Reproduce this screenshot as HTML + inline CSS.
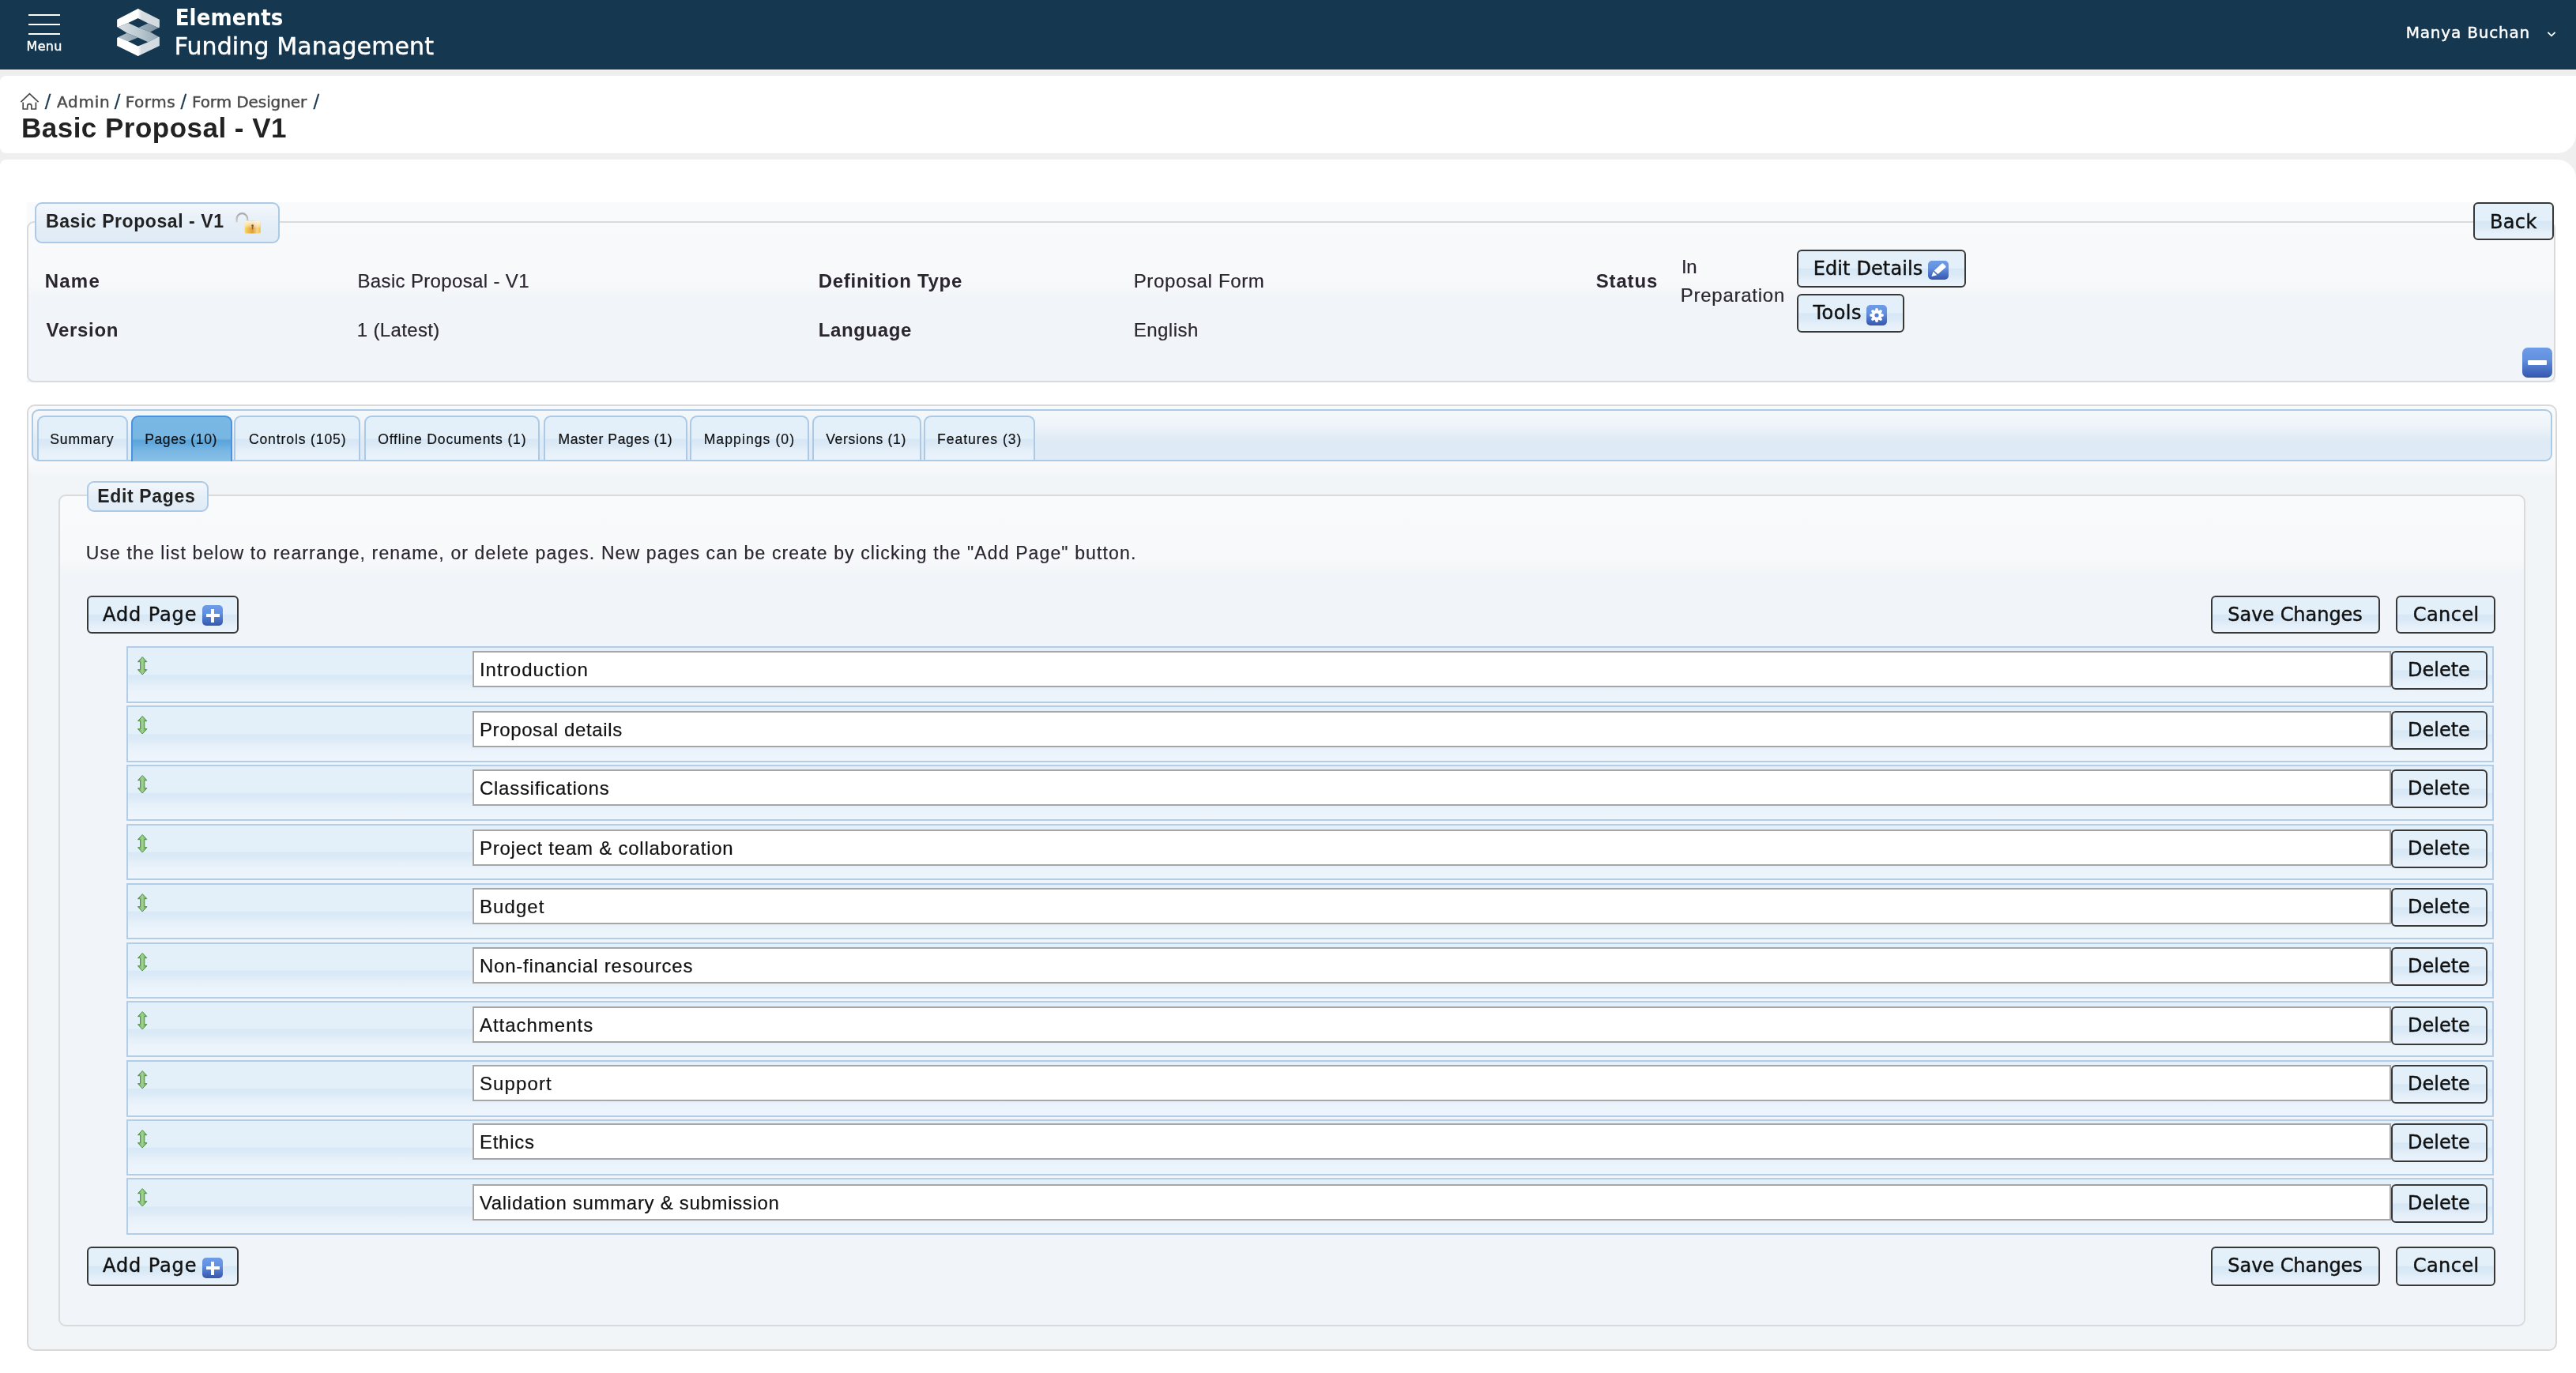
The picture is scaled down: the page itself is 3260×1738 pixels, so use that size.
<!DOCTYPE html>
<html lang="en">
<head>
<meta charset="utf-8">
<title>Basic Proposal - V1 - Form Designer</title>
<style>
html,body{margin:0;padding:0}
body{width:3260px;height:1738px;overflow:hidden;background:#fff;position:relative;font-family:"Liberation Sans","DejaVu Sans",sans-serif}
.b{position:absolute;box-sizing:border-box}
.t{position:absolute;white-space:pre;line-height:1}
svg.b{overflow:visible}
.hdr{left:0;top:0;width:3260px;height:88px;background:#15374f}
.gray{left:0;top:88px;width:3260px;height:140px;background:#efefef}
.crumbs{left:0;top:96px;width:3260px;height:98px;background:#fff;border-radius:8px 0 24px 8px}
.main{left:0;top:202px;width:3260px;height:1536px;background:#fff;border-radius:8px 24px 0 0}
.fsbg{background:linear-gradient(to bottom,#f9fafc 0,#f8f9fb 100px,#f1f4f8 122px,#f1f4f8 100%)}
.fs{border:2px solid #d9dadb;border-radius:9px}
.fsbg2{background:linear-gradient(to bottom,#f9fafc 0,#f8f9fb 78px,#f1f4f8 100px,#f1f4f8 100%)}
.lg{border:2px solid #acc9e6;border-radius:9px;background:linear-gradient(to bottom,#f3f7fb 0,#e4eef7 55%,#dfebf6 100%)}
.btn{border:2px solid #383838;border-radius:6px;background:linear-gradient(to bottom,#e4f0f9 0,#e3f0f9 calc(50% - 1px),#d6e7f5 calc(50% + .5px),#dae9f6 calc(50% + 7px),#e4eff9 calc(50% + 14px),#ebf3fb 100%)}
.row{border:2px solid #b1cde8;background:linear-gradient(to bottom,#e3f0f9 0,#e3f0f9 calc(50% - .5px),#d8e8f6 calc(50% + 1px),#dcebf7 calc(50% + 7px),#e5f0f9 calc(50% + 14px),#ebf3fb calc(50% + 22px),#eef5fb 100%)}
.inp{border:2px solid #a6a6a6;background:#fff}
.tabsbox{border:2px solid #d9d9d9;border-radius:10px;background:linear-gradient(to bottom,#f9fafc 0,#f9fafc 68px,#f2f5f8 90px,#f2f5f8 100%)}
.nav{border:2px solid #acc9e6;border-radius:9px;background:linear-gradient(to bottom,#f4f8fb 0,#eef4f9 30%,#deeaf5 62%,#dfebf5 100%)}
.tab{border:2px solid #acc9e6;border-bottom:0;border-radius:9px 9px 0 0;background:linear-gradient(to bottom,#e4f0f9 0,#e4f0f9 calc(50% - .5px),#d7e7f5 calc(50% + 1.5px),#dceaf6 calc(50% + 8px),#e7f1fa calc(50% + 18px),#eaf3fb 100%)}
.tab.act{border-color:#4c93de;background:linear-gradient(to bottom,#79b8e4 0,#78b7e3 calc(50% - 1px),#5ba5db calc(50% + 1.5px),#62a9dd calc(50% + 6px),#78b6e3 calc(50% + 14px),#88c1e8 100%)}
.ico{border-radius:5px;background:linear-gradient(to bottom,#6f9ce7 0,#6390df 40%,#4a72c6 70%,#3557ad 100%)}
</style>
</head>
<body>
<svg width="0" height="0" style="position:absolute">
  <defs>
    <linearGradient id="gArrow" x1="0" x2="1" y1="0" y2="0">
      <stop offset="0" stop-color="#569a49"/><stop offset=".3" stop-color="#8cc47c"/><stop offset=".5" stop-color="#a4d095"/><stop offset=".7" stop-color="#86bf76"/><stop offset="1" stop-color="#569a49"/>
    </linearGradient>
    <g id="updown">
      <path d="M8.2 1.6 L13.9 7.7 H10.8 V17.7 H13.9 L8.2 24 L2.5 17.7 H5.6 V7.7 H2.5 Z" fill="url(#gArrow)" stroke="#4f9045" stroke-width="1" stroke-linejoin="round"/>
    </g>
    <linearGradient id="gLR" x1="0" x2="1" y1="0" y2="0"><stop offset="0" stop-color="#fff"/><stop offset=".04" stop-color="#f2f5f7"/><stop offset=".16" stop-color="#d6dde2"/><stop offset="1" stop-color="#d2dae0"/></linearGradient>
    <linearGradient id="gBand" x1="0" x2="1" y1="0" y2="0"><stop offset="0" stop-color="#d9e0e5"/><stop offset=".5" stop-color="#bccad2"/><stop offset="1" stop-color="#97aab7"/></linearGradient>
    <linearGradient id="gSh1" x1="0" x2="1" y1="0" y2="0"><stop offset="0" stop-color="#9db0bc"/><stop offset="1" stop-color="#7d92a1"/></linearGradient>
    <linearGradient id="gSh2" x1="0" x2="1" y1="0" y2="0"><stop offset="0" stop-color="#b5c3cc"/><stop offset="1" stop-color="#8fa3b1"/></linearGradient>
    <linearGradient id="gShk" gradientUnits="userSpaceOnUse" x1="0" x2="0" y1="269" y2="281"><stop offset="0" stop-color="#a6a6a6"/><stop offset=".5" stop-color="#b8b8b8"/><stop offset="1" stop-color="#d0d0d0"/></linearGradient>
    <linearGradient id="gLock" x1="0" x2="1" y1="0" y2="0"><stop offset="0" stop-color="#f7dc62"/><stop offset=".25" stop-color="#ecb84a"/><stop offset=".5" stop-color="#e39d3f"/><stop offset=".78" stop-color="#f6d58a"/><stop offset="1" stop-color="#edc246"/></linearGradient>
    <linearGradient id="gLockT" x1="0" x2="0" y1="0" y2="1"><stop offset="0" stop-color="#fff8e6" stop-opacity=".95"/><stop offset=".3" stop-color="#fff1cf" stop-opacity=".7"/><stop offset=".6" stop-color="#fff" stop-opacity="0"/></linearGradient>
  </defs>
</svg>

<!-- header -->
<div class="b hdr"></div>
<div class="b gray"></div>
<div class="b" style="left:0;top:88px;width:3260px;height:1px;background:#f7f7f7"></div>
<div class="b crumbs"></div>
<div class="b main"></div>

<!-- hamburger -->
<div class="b" style="left:36px;top:17.5px;width:40px;height:2px;background:#fff"></div>
<div class="b" style="left:36px;top:30px;width:40px;height:2px;background:#fff"></div>
<div class="b" style="left:36px;top:42px;width:40px;height:2px;background:#fff"></div>

<!-- logo -->
<svg class="b" style="left:148px;top:11px" width="54" height="60" viewBox="0 0 53.7 60">
  <polygon points="27.2,0.35 26.5,0 0,13.8 0,22.9 1,23.4 14.1,18 26.5,12.1 27.2,12.4" fill="#fff"/>
  <polygon points="26.5,0 53.7,13.8 53.7,23.6 52.5,24.2 39.3,18.4 26.5,12.1" fill="url(#gLR)"/>
  <polygon points="39.3,18.4 52.5,24.2 41.9,29.5 27.2,23.9" fill="url(#gSh1)"/>
  <polygon points="1,23.4 14.1,18 27.2,23.9 41.9,29.5 52.5,35.5 39.3,42.3 26.5,36.4 12.5,30.8" fill="url(#gBand)"/>
  <polygon points="12.5,30.8 26.5,36.4 14.4,41.6 1.6,36" fill="url(#gSh2)"/>
  <polygon points="0,37 1.6,36 14.4,41.6 26.5,47.5 27.2,47.2 27.2,59.65 26.5,60 0,46.9" fill="#fff"/>
  <polygon points="26.5,47.5 39.3,42.3 52.5,35.5 53.7,36 53.7,46.9 26.5,60" fill="url(#gLR)"/>
</svg>

<!-- user chevron -->
<svg class="b" style="left:3222px;top:38px" width="14" height="10" viewBox="0 0 14 10"><path d="M2.4 2.8 L7 7.3 L11.6 2.8" fill="none" stroke="#fff" stroke-width="1.8"/></svg>

<!-- home icon -->
<svg class="b" style="left:24px;top:116px" width="28" height="24" viewBox="24 116 28 24"><path d="M26.4 129.2 L37.4 118.7 L48.6 129.2 M29.2 129.4 V138 H34.7 V134.3 a2.6 2.6 0 0 1 5.2 0 V138 H45.4 V129.4" fill="none" stroke="#4a4a4a" stroke-width="1.7" stroke-linejoin="miter"/></svg>

<!-- fieldset 1 -->
<div class="b fsbg" style="left:34px;top:256px;width:3200px;height:228px"></div>
<div class="b fs" style="left:34px;top:280px;width:3200px;height:204px"></div>
<div class="b lg" style="left:44px;top:256px;width:310px;height:52px"></div>
<!-- lock -->
<svg class="b" style="left:296px;top:266px" width="36" height="32" viewBox="296 266 36 32">
  <path d="M299.6 280.4 V277 a6.8 6.8 0 0 1 13.6 0 V280" fill="none" stroke="url(#gShk)" stroke-width="2.3" stroke-linecap="round"/>
  <rect x="309.6" y="279.4" width="20.2" height="16" rx="1.8" fill="url(#gLock)"/>
  <rect x="309.6" y="279.4" width="20.2" height="16" rx="1.8" fill="url(#gLockT)"/>
  <circle cx="319.6" cy="285.6" r="1.35" fill="#6d5a3a"/><path d="M319.6 286 V289.8" stroke="#7a6540" stroke-width="1.5" stroke-linecap="round"/>
</svg>
<!-- buttons in fieldset -->
<div class="b btn" style="left:2274px;top:316px;width:214px;height:48px"></div>
<div class="b ico" style="left:2440px;top:330px;width:26px;height:24px"></div>
<svg class="b" style="left:2440px;top:330px" width="26" height="24" viewBox="2440 330 26 24"><path d="M2457.6 333.6 Q2458.4 333 2459.2 333.7 L2462.3 336.8 Q2463 337.6 2462.2 338.4 L2452.4 347 L2447.8 342.5 Z" fill="#fff"/><polygon points="2446.6,343.7 2451.2,348.2 2444.4,350" fill="#fff"/></svg>
<div class="b btn" style="left:2274px;top:372px;width:136px;height:49px"></div>
<div class="b ico" style="left:2362px;top:386px;width:26px;height:26px"></div>
<svg class="b" style="left:2362px;top:386px" width="26" height="26" viewBox="-13 -13 26 26">
  <g fill="#fff"><circle r="6.1"/>
  <g id="tooth"><path d="M-2.3 -5 L-1.5 -8.4 Q0 -9.4 1.5 -8.4 L2.3 -5 Z"/></g>
  <use href="#tooth" transform="rotate(45)"/><use href="#tooth" transform="rotate(90)"/><use href="#tooth" transform="rotate(135)"/><use href="#tooth" transform="rotate(180)"/><use href="#tooth" transform="rotate(225)"/><use href="#tooth" transform="rotate(270)"/><use href="#tooth" transform="rotate(315)"/></g>
  <circle r="2.6" fill="#4f7bd0"/>
</svg>
<div class="b btn" style="left:3130px;top:256px;width:102px;height:48px"></div>
<div class="b ico" style="left:3192px;top:440px;width:38px;height:38px;border-radius:7px"></div>
<div class="b" style="left:3199px;top:456px;width:24px;height:6px;background:#fff;border-radius:1px"></div>

<!-- tabs -->
<div class="b tabsbox" style="left:34px;top:512px;width:3202px;height:1198px"></div>
<div class="b nav" style="left:40px;top:518px;width:3190px;height:66px"></div>
<div class='b tab' style='left:46.50px;top:526px;width:115.25px;height:56px'></div>
<div class='b tab act' style='left:166.00px;top:526px;width:127.75px;height:58px'></div>
<div class='b tab' style='left:296.25px;top:526px;width:159.25px;height:56px'></div>
<div class='b tab' style='left:460.50px;top:526px;width:222.75px;height:56px'></div>
<div class='b tab' style='left:688.25px;top:526px;width:181.25px;height:56px'></div>
<div class='b tab' style='left:872.50px;top:526px;width:151.25px;height:56px'></div>
<div class='b tab' style='left:1028.25px;top:526px;width:137.25px;height:56px'></div>
<div class='b tab' style='left:1168.75px;top:526px;width:141.25px;height:56px'></div>

<!-- edit pages fieldset -->
<div class="b fs fsbg2" style="left:74px;top:626px;width:3122px;height:1053px"></div>
<div class="b lg" style="left:110px;top:608.5px;width:154px;height:39px"></div>

<!-- top / bottom button rows -->
<div class="b btn" style="left:110px;top:754px;width:192px;height:48px"></div>
<div class="b ico" style="left:256px;top:766px;width:26px;height:26px"></div>
<div class="b" style="left:267px;top:770.5px;width:4px;height:17px;background:#fff"></div>
<div class="b" style="left:260.5px;top:777px;width:17px;height:4px;background:#fff"></div>
<div class="b btn" style="left:2798px;top:754px;width:214px;height:48px"></div>
<div class="b btn" style="left:3032px;top:754px;width:126px;height:48px"></div>

<div class="b btn" style="left:110px;top:1578px;width:192px;height:49.5px"></div>
<div class="b ico" style="left:256px;top:1592px;width:26px;height:26px"></div>
<div class="b" style="left:267px;top:1596.5px;width:4px;height:17px;background:#fff"></div>
<div class="b" style="left:260.5px;top:1603px;width:17px;height:4px;background:#fff"></div>
<div class="b btn" style="left:2798px;top:1578px;width:214px;height:49.5px"></div>
<div class="b btn" style="left:3032px;top:1578px;width:126px;height:49.5px"></div>

<div class='b row' style='left:160px;top:818px;width:2996px;height:71.5px;'></div>
<div class='b inp' style='left:598px;top:824px;width:2428px;height:45.5px;'></div>
<div class='b btn' style='left:3026px;top:824px;width:122px;height:49px;'></div>
<svg class='b' style='left:172px;top:830.3px' width='16' height='26' viewBox='0 0 16 26'><use href='#updown'/></svg>
<div class='b row' style='left:160px;top:893px;width:2996px;height:71.5px;'></div>
<div class='b inp' style='left:598px;top:900px;width:2428px;height:45.5px;'></div>
<div class='b btn' style='left:3026px;top:900px;width:122px;height:49px;'></div>
<svg class='b' style='left:172px;top:905.3px' width='16' height='26' viewBox='0 0 16 26'><use href='#updown'/></svg>
<div class='b row' style='left:160px;top:967.5px;width:2996px;height:71.5px;'></div>
<div class='b inp' style='left:598px;top:974px;width:2428px;height:45.5px;'></div>
<div class='b btn' style='left:3026px;top:974px;width:122px;height:49px;'></div>
<svg class='b' style='left:172px;top:979.8px' width='16' height='26' viewBox='0 0 16 26'><use href='#updown'/></svg>
<div class='b row' style='left:160px;top:1042.5px;width:2996px;height:71.5px;'></div>
<div class='b inp' style='left:598px;top:1050px;width:2428px;height:45.5px;'></div>
<div class='b btn' style='left:3026px;top:1050px;width:122px;height:49px;'></div>
<svg class='b' style='left:172px;top:1054.8px' width='16' height='26' viewBox='0 0 16 26'><use href='#updown'/></svg>
<div class='b row' style='left:160px;top:1117.5px;width:2996px;height:71.5px;'></div>
<div class='b inp' style='left:598px;top:1124px;width:2428px;height:45.5px;'></div>
<div class='b btn' style='left:3026px;top:1124px;width:122px;height:49px;'></div>
<svg class='b' style='left:172px;top:1129.8px' width='16' height='26' viewBox='0 0 16 26'><use href='#updown'/></svg>
<div class='b row' style='left:160px;top:1192.5px;width:2996px;height:71.5px;'></div>
<div class='b inp' style='left:598px;top:1199px;width:2428px;height:45.5px;'></div>
<div class='b btn' style='left:3026px;top:1199px;width:122px;height:49px;'></div>
<svg class='b' style='left:172px;top:1204.8px' width='16' height='26' viewBox='0 0 16 26'><use href='#updown'/></svg>
<div class='b row' style='left:160px;top:1266.5px;width:2996px;height:71.5px;'></div>
<div class='b inp' style='left:598px;top:1274px;width:2428px;height:45.5px;'></div>
<div class='b btn' style='left:3026px;top:1274px;width:122px;height:49px;'></div>
<svg class='b' style='left:172px;top:1278.8px' width='16' height='26' viewBox='0 0 16 26'><use href='#updown'/></svg>
<div class='b row' style='left:160px;top:1342px;width:2996px;height:71.5px;'></div>
<div class='b inp' style='left:598px;top:1348px;width:2428px;height:45.5px;'></div>
<div class='b btn' style='left:3026px;top:1348px;width:122px;height:49px;'></div>
<svg class='b' style='left:172px;top:1354.3px' width='16' height='26' viewBox='0 0 16 26'><use href='#updown'/></svg>
<div class='b row' style='left:160px;top:1416.5px;width:2996px;height:71.5px;'></div>
<div class='b inp' style='left:598px;top:1422px;width:2428px;height:45.5px;'></div>
<div class='b btn' style='left:3026px;top:1422px;width:122px;height:49px;'></div>
<svg class='b' style='left:172px;top:1428.8px' width='16' height='26' viewBox='0 0 16 26'><use href='#updown'/></svg>
<div class='b row' style='left:160px;top:1491px;width:2996px;height:71.5px;'></div>
<div class='b inp' style='left:598px;top:1499px;width:2428px;height:45.5px;'></div>
<div class='b btn' style='left:3026px;top:1499px;width:122px;height:49px;'></div>
<svg class='b' style='left:172px;top:1503.3px' width='16' height='26' viewBox='0 0 16 26'><use href='#updown'/></svg>
<div id="txt" style="position:absolute;left:0;top:0;width:3260px;height:1738px;will-change:transform">
<span class='t' style='left:33.50px;top:51.00px;font-family:&quot;DejaVu Sans&quot;, &quot;Liberation Sans&quot;, sans-serif;font-size:16px;font-weight:400;color:#fff;letter-spacing:0.354px;-webkit-text-stroke:0.45px #fff'>Menu</span>
<span class='t' style='left:221.70px;top:8.00px;font-family:&quot;DejaVu Sans Condensed&quot;, &quot;DejaVu Sans&quot;, sans-serif;font-size:29px;font-weight:700;color:#fff;letter-spacing:0.095px'>Elements</span>
<span class='t' style='left:220.70px;top:44.00px;font-family:&quot;DejaVu Sans&quot;, &quot;Liberation Sans&quot;, sans-serif;font-size:30px;font-weight:400;color:#fff;letter-spacing:0.121px;-webkit-text-stroke:0.45px #fff'>Funding Management</span>
<span class='t' style='left:3044.70px;top:30.70px;font-family:&quot;DejaVu Sans&quot;, &quot;Liberation Sans&quot;, sans-serif;font-size:20px;font-weight:400;color:#fff;letter-spacing:0.814px;-webkit-text-stroke:0.45px #fff'>Manya Buchan</span>
<span class='t' style='left:56.70px;top:117.30px;font-family:&quot;DejaVu Sans&quot;, &quot;Liberation Sans&quot;, sans-serif;font-size:22.5px;font-weight:400;color:#15374f;letter-spacing:0.000px;-webkit-text-stroke:0.3px #15374f'>/</span>
<span class='t' style='left:144.70px;top:117.30px;font-family:&quot;DejaVu Sans&quot;, &quot;Liberation Sans&quot;, sans-serif;font-size:22.5px;font-weight:400;color:#15374f;letter-spacing:0.000px;-webkit-text-stroke:0.3px #15374f'>/</span>
<span class='t' style='left:228.45px;top:117.30px;font-family:&quot;DejaVu Sans&quot;, &quot;Liberation Sans&quot;, sans-serif;font-size:22.5px;font-weight:400;color:#15374f;letter-spacing:0.000px;-webkit-text-stroke:0.3px #15374f'>/</span>
<span class='t' style='left:396.45px;top:117.30px;font-family:&quot;DejaVu Sans&quot;, &quot;Liberation Sans&quot;, sans-serif;font-size:22.5px;font-weight:400;color:#15374f;letter-spacing:0.000px;-webkit-text-stroke:0.3px #15374f'>/</span>
<span class='t' style='left:72.00px;top:119.00px;font-family:&quot;DejaVu Sans&quot;, &quot;Liberation Sans&quot;, sans-serif;font-size:20px;font-weight:400;color:#4a4a4a;letter-spacing:0.750px;-webkit-text-stroke:0.45px #4a4a4a'>Admin</span>
<span class='t' style='left:158.75px;top:119.00px;font-family:&quot;DejaVu Sans&quot;, &quot;Liberation Sans&quot;, sans-serif;font-size:20px;font-weight:400;color:#4a4a4a;letter-spacing:0.547px;-webkit-text-stroke:0.45px #4a4a4a'>Forms</span>
<span class='t' style='left:243.00px;top:119.00px;font-family:&quot;DejaVu Sans&quot;, &quot;Liberation Sans&quot;, sans-serif;font-size:20px;font-weight:400;color:#4a4a4a;letter-spacing:-0.090px;-webkit-text-stroke:0.45px #4a4a4a'>Form Designer</span>
<span class='t' style='left:27.00px;top:144.00px;font-family:&quot;Liberation Sans&quot;, &quot;DejaVu Sans&quot;, sans-serif;font-size:35px;font-weight:700;color:#222;letter-spacing:0.484px'>Basic Proposal - V1</span>
<span class='t' style='left:58.00px;top:268.50px;font-family:&quot;Liberation Sans&quot;, &quot;DejaVu Sans&quot;, sans-serif;font-size:23px;font-weight:700;color:#222;letter-spacing:0.569px'>Basic Proposal - V1</span>
<span class='t' style='left:56.70px;top:344.00px;font-family:&quot;Liberation Sans&quot;, &quot;DejaVu Sans&quot;, sans-serif;font-size:24px;font-weight:700;color:#2b2530;letter-spacing:1.225px'>Name</span>
<span class='t' style='left:58.50px;top:406.25px;font-family:&quot;Liberation Sans&quot;, &quot;DejaVu Sans&quot;, sans-serif;font-size:24px;font-weight:700;color:#2b2530;letter-spacing:0.714px'>Version</span>
<span class='t' style='left:452.50px;top:344.00px;font-family:&quot;Liberation Sans&quot;, &quot;DejaVu Sans&quot;, sans-serif;font-size:24px;font-weight:400;color:#2b2530;letter-spacing:0.346px;-webkit-text-stroke:0.2px #2b2530'>Basic Proposal - V1</span>
<span class='t' style='left:451.70px;top:406.25px;font-family:&quot;Liberation Sans&quot;, &quot;DejaVu Sans&quot;, sans-serif;font-size:24px;font-weight:400;color:#2b2530;letter-spacing:0.357px;-webkit-text-stroke:0.2px #2b2530'>1 (Latest)</span>
<span class='t' style='left:1035.70px;top:344.00px;font-family:&quot;Liberation Sans&quot;, &quot;DejaVu Sans&quot;, sans-serif;font-size:24px;font-weight:700;color:#2b2530;letter-spacing:0.717px'>Definition Type</span>
<span class='t' style='left:1035.70px;top:406.25px;font-family:&quot;Liberation Sans&quot;, &quot;DejaVu Sans&quot;, sans-serif;font-size:24px;font-weight:700;color:#2b2530;letter-spacing:0.608px'>Language</span>
<span class='t' style='left:1434.70px;top:344.00px;font-family:&quot;Liberation Sans&quot;, &quot;DejaVu Sans&quot;, sans-serif;font-size:24px;font-weight:400;color:#2b2530;letter-spacing:0.647px;-webkit-text-stroke:0.2px #2b2530'>Proposal Form</span>
<span class='t' style='left:1434.70px;top:406.25px;font-family:&quot;Liberation Sans&quot;, &quot;DejaVu Sans&quot;, sans-serif;font-size:24px;font-weight:400;color:#2b2530;letter-spacing:0.480px;-webkit-text-stroke:0.2px #2b2530'>English</span>
<span class='t' style='left:2019.70px;top:343.50px;font-family:&quot;Liberation Sans&quot;, &quot;DejaVu Sans&quot;, sans-serif;font-size:24px;font-weight:700;color:#2b2530;letter-spacing:0.848px'>Status</span>
<span class='t' style='left:2128.00px;top:325.50px;font-family:&quot;Liberation Sans&quot;, &quot;DejaVu Sans&quot;, sans-serif;font-size:24px;font-weight:400;color:#2b2530;letter-spacing:-0.516px;-webkit-text-stroke:0.2px #2b2530'>In</span>
<span class='t' style='left:2126.70px;top:362.00px;font-family:&quot;Liberation Sans&quot;, &quot;DejaVu Sans&quot;, sans-serif;font-size:24px;font-weight:400;color:#2b2530;letter-spacing:0.752px;-webkit-text-stroke:0.2px #2b2530'>Preparation</span>
<span class='t' style='left:2294.70px;top:328.00px;font-family:&quot;DejaVu Sans&quot;, &quot;Liberation Sans&quot;, sans-serif;font-size:24px;font-weight:400;color:#111;letter-spacing:0.117px;-webkit-text-stroke:0.45px #111'>Edit Details</span>
<span class='t' style='left:2294.50px;top:384.00px;font-family:&quot;DejaVu Sans&quot;, &quot;Liberation Sans&quot;, sans-serif;font-size:24px;font-weight:400;color:#111;letter-spacing:0.469px;-webkit-text-stroke:0.45px #111'>Tools</span>
<span class='t' style='left:3150.90px;top:268.50px;font-family:&quot;DejaVu Sans&quot;, &quot;Liberation Sans&quot;, sans-serif;font-size:24px;font-weight:400;color:#111;letter-spacing:0.378px;-webkit-text-stroke:0.45px #111'>Back</span>
<span class='t' style='left:63.15px;top:547.90px;font-family:&quot;Liberation Sans&quot;, &quot;DejaVu Sans&quot;, sans-serif;font-size:17.6px;font-weight:400;color:#111;letter-spacing:0.861px;-webkit-text-stroke:0.2px #111'>Summary</span>
<span class='t' style='left:183.15px;top:547.90px;font-family:&quot;Liberation Sans&quot;, &quot;DejaVu Sans&quot;, sans-serif;font-size:17.6px;font-weight:400;color:#111;letter-spacing:0.571px;-webkit-text-stroke:0.2px #111'>Pages (10)</span>
<span class='t' style='left:314.90px;top:547.90px;font-family:&quot;Liberation Sans&quot;, &quot;DejaVu Sans&quot;, sans-serif;font-size:17.6px;font-weight:400;color:#111;letter-spacing:0.863px;-webkit-text-stroke:0.2px #111'>Controls (105)</span>
<span class='t' style='left:478.15px;top:547.90px;font-family:&quot;Liberation Sans&quot;, &quot;DejaVu Sans&quot;, sans-serif;font-size:17.6px;font-weight:400;color:#111;letter-spacing:0.833px;-webkit-text-stroke:0.2px #111'>Offline Documents (1)</span>
<span class='t' style='left:706.40px;top:547.90px;font-family:&quot;Liberation Sans&quot;, &quot;DejaVu Sans&quot;, sans-serif;font-size:17.6px;font-weight:400;color:#111;letter-spacing:0.617px;-webkit-text-stroke:0.2px #111'>Master Pages (1)</span>
<span class='t' style='left:890.65px;top:547.90px;font-family:&quot;Liberation Sans&quot;, &quot;DejaVu Sans&quot;, sans-serif;font-size:17.6px;font-weight:400;color:#111;letter-spacing:1.069px;-webkit-text-stroke:0.2px #111'>Mappings (0)</span>
<span class='t' style='left:1045.15px;top:547.90px;font-family:&quot;Liberation Sans&quot;, &quot;DejaVu Sans&quot;, sans-serif;font-size:17.6px;font-weight:400;color:#111;letter-spacing:0.666px;-webkit-text-stroke:0.2px #111'>Versions (1)</span>
<span class='t' style='left:1186.10px;top:547.90px;font-family:&quot;Liberation Sans&quot;, &quot;DejaVu Sans&quot;, sans-serif;font-size:17.6px;font-weight:400;color:#111;letter-spacing:0.947px;-webkit-text-stroke:0.2px #111'>Features (3)</span>
<span class='t' style='left:123.25px;top:617.25px;font-family:&quot;Liberation Sans&quot;, &quot;DejaVu Sans&quot;, sans-serif;font-size:23px;font-weight:700;color:#222;letter-spacing:0.655px'>Edit Pages</span>
<span class='t' style='left:108.70px;top:688.90px;font-family:&quot;Liberation Sans&quot;, &quot;DejaVu Sans&quot;, sans-serif;font-size:23px;font-weight:400;color:#2b2530;letter-spacing:1.127px;-webkit-text-stroke:0.2px #2b2530'>Use the list below to rearrange, rename, or delete pages. New pages can be create by clicking the &quot;Add Page&quot; button.</span>
<span class='t' style='left:130.00px;top:766.25px;font-family:&quot;DejaVu Sans&quot;, &quot;Liberation Sans&quot;, sans-serif;font-size:24px;font-weight:400;color:#111;letter-spacing:0.900px;-webkit-text-stroke:0.45px #111'>Add Page</span>
<span class='t' style='left:2819.25px;top:766.25px;font-family:&quot;DejaVu Sans&quot;, &quot;Liberation Sans&quot;, sans-serif;font-size:24px;font-weight:400;color:#111;letter-spacing:-0.031px;-webkit-text-stroke:0.45px #111'>Save Changes</span>
<span class='t' style='left:3053.70px;top:766.25px;font-family:&quot;DejaVu Sans&quot;, &quot;Liberation Sans&quot;, sans-serif;font-size:24px;font-weight:400;color:#111;letter-spacing:0.457px;-webkit-text-stroke:0.45px #111'>Cancel</span>
<span class='t' style='left:130.00px;top:1589.60px;font-family:&quot;DejaVu Sans&quot;, &quot;Liberation Sans&quot;, sans-serif;font-size:24px;font-weight:400;color:#111;letter-spacing:0.900px;-webkit-text-stroke:0.45px #111'>Add Page</span>
<span class='t' style='left:2819.25px;top:1589.60px;font-family:&quot;DejaVu Sans&quot;, &quot;Liberation Sans&quot;, sans-serif;font-size:24px;font-weight:400;color:#111;letter-spacing:-0.031px;-webkit-text-stroke:0.45px #111'>Save Changes</span>
<span class='t' style='left:3053.70px;top:1589.60px;font-family:&quot;DejaVu Sans&quot;, &quot;Liberation Sans&quot;, sans-serif;font-size:24px;font-weight:400;color:#111;letter-spacing:0.457px;-webkit-text-stroke:0.45px #111'>Cancel</span>
<span class='t' style='left:606.90px;top:836.05px;font-family:&quot;Liberation Sans&quot;, &quot;DejaVu Sans&quot;, sans-serif;font-size:24px;font-weight:400;color:#111;letter-spacing:1.057px;-webkit-text-stroke:0.2px #111'>Introduction</span>
<span class='t' style='left:3047.00px;top:836.05px;font-family:&quot;DejaVu Sans&quot;, &quot;Liberation Sans&quot;, sans-serif;font-size:24px;font-weight:400;color:#111;letter-spacing:-0.012px;-webkit-text-stroke:0.45px #111'>Delete</span>
<span class='t' style='left:606.90px;top:912.05px;font-family:&quot;Liberation Sans&quot;, &quot;DejaVu Sans&quot;, sans-serif;font-size:24px;font-weight:400;color:#111;letter-spacing:0.636px;-webkit-text-stroke:0.2px #111'>Proposal details</span>
<span class='t' style='left:3047.00px;top:912.05px;font-family:&quot;DejaVu Sans&quot;, &quot;Liberation Sans&quot;, sans-serif;font-size:24px;font-weight:400;color:#111;letter-spacing:-0.012px;-webkit-text-stroke:0.45px #111'>Delete</span>
<span class='t' style='left:606.90px;top:986.30px;font-family:&quot;Liberation Sans&quot;, &quot;DejaVu Sans&quot;, sans-serif;font-size:24px;font-weight:400;color:#111;letter-spacing:0.744px;-webkit-text-stroke:0.2px #111'>Classifications</span>
<span class='t' style='left:3047.00px;top:986.30px;font-family:&quot;DejaVu Sans&quot;, &quot;Liberation Sans&quot;, sans-serif;font-size:24px;font-weight:400;color:#111;letter-spacing:-0.012px;-webkit-text-stroke:0.45px #111'>Delete</span>
<span class='t' style='left:606.90px;top:1062.05px;font-family:&quot;Liberation Sans&quot;, &quot;DejaVu Sans&quot;, sans-serif;font-size:24px;font-weight:400;color:#111;letter-spacing:0.765px;-webkit-text-stroke:0.2px #111'>Project team &amp; collaboration</span>
<span class='t' style='left:3047.00px;top:1062.05px;font-family:&quot;DejaVu Sans&quot;, &quot;Liberation Sans&quot;, sans-serif;font-size:24px;font-weight:400;color:#111;letter-spacing:-0.012px;-webkit-text-stroke:0.45px #111'>Delete</span>
<span class='t' style='left:606.90px;top:1136.30px;font-family:&quot;Liberation Sans&quot;, &quot;DejaVu Sans&quot;, sans-serif;font-size:24px;font-weight:400;color:#111;letter-spacing:1.094px;-webkit-text-stroke:0.2px #111'>Budget</span>
<span class='t' style='left:3047.00px;top:1136.30px;font-family:&quot;DejaVu Sans&quot;, &quot;Liberation Sans&quot;, sans-serif;font-size:24px;font-weight:400;color:#111;letter-spacing:-0.012px;-webkit-text-stroke:0.45px #111'>Delete</span>
<span class='t' style='left:606.90px;top:1210.55px;font-family:&quot;Liberation Sans&quot;, &quot;DejaVu Sans&quot;, sans-serif;font-size:24px;font-weight:400;color:#111;letter-spacing:0.792px;-webkit-text-stroke:0.2px #111'>Non-financial resources</span>
<span class='t' style='left:3047.00px;top:1210.55px;font-family:&quot;DejaVu Sans&quot;, &quot;Liberation Sans&quot;, sans-serif;font-size:24px;font-weight:400;color:#111;letter-spacing:-0.012px;-webkit-text-stroke:0.45px #111'>Delete</span>
<span class='t' style='left:606.90px;top:1286.05px;font-family:&quot;Liberation Sans&quot;, &quot;DejaVu Sans&quot;, sans-serif;font-size:24px;font-weight:400;color:#111;letter-spacing:0.989px;-webkit-text-stroke:0.2px #111'>Attachments</span>
<span class='t' style='left:3047.00px;top:1286.05px;font-family:&quot;DejaVu Sans&quot;, &quot;Liberation Sans&quot;, sans-serif;font-size:24px;font-weight:400;color:#111;letter-spacing:-0.012px;-webkit-text-stroke:0.45px #111'>Delete</span>
<span class='t' style='left:606.90px;top:1360.05px;font-family:&quot;Liberation Sans&quot;, &quot;DejaVu Sans&quot;, sans-serif;font-size:24px;font-weight:400;color:#111;letter-spacing:1.123px;-webkit-text-stroke:0.2px #111'>Support</span>
<span class='t' style='left:3047.00px;top:1360.05px;font-family:&quot;DejaVu Sans&quot;, &quot;Liberation Sans&quot;, sans-serif;font-size:24px;font-weight:400;color:#111;letter-spacing:-0.012px;-webkit-text-stroke:0.45px #111'>Delete</span>
<span class='t' style='left:606.90px;top:1434.30px;font-family:&quot;Liberation Sans&quot;, &quot;DejaVu Sans&quot;, sans-serif;font-size:24px;font-weight:400;color:#111;letter-spacing:0.738px;-webkit-text-stroke:0.2px #111'>Ethics</span>
<span class='t' style='left:3047.00px;top:1434.30px;font-family:&quot;DejaVu Sans&quot;, &quot;Liberation Sans&quot;, sans-serif;font-size:24px;font-weight:400;color:#111;letter-spacing:-0.012px;-webkit-text-stroke:0.45px #111'>Delete</span>
<span class='t' style='left:606.90px;top:1510.55px;font-family:&quot;Liberation Sans&quot;, &quot;DejaVu Sans&quot;, sans-serif;font-size:24px;font-weight:400;color:#111;letter-spacing:0.690px;-webkit-text-stroke:0.2px #111'>Validation summary &amp; submission</span>
<span class='t' style='left:3047.00px;top:1510.55px;font-family:&quot;DejaVu Sans&quot;, &quot;Liberation Sans&quot;, sans-serif;font-size:24px;font-weight:400;color:#111;letter-spacing:-0.012px;-webkit-text-stroke:0.45px #111'>Delete</span>
</div>
<script>(function(){try{var w=window.innerWidth||document.documentElement.clientWidth;if(w&&Math.abs(w-3260)>2){document.documentElement.style.zoom=w/3260;}}catch(e){}})();</script>
</body>
</html>
